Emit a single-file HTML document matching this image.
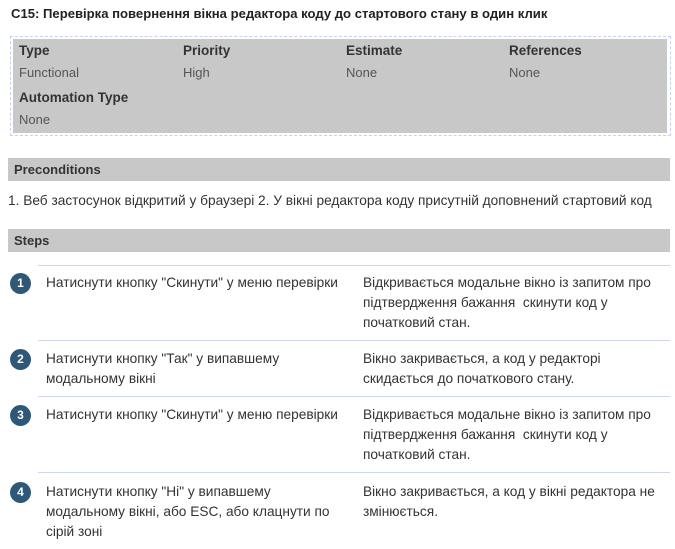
<!DOCTYPE html>
<html><head><meta charset="utf-8"><style>
*{margin:0;padding:0;box-sizing:border-box}
body{width:675px;height:549px;background:#fff;font-family:"Liberation Sans","DejaVu Sans",sans-serif;color:#333;position:relative;overflow:hidden}
.a{position:absolute;white-space:nowrap}
.t{font-size:13.1px;font-weight:bold;color:#222}
.lb{font-size:13.5px;font-weight:bold;color:#333}
.v{font-size:13px;color:#555}
.bar{position:absolute;left:8px;width:662px;height:23px;background:#c8c8c8}
.bar span{position:absolute;left:6px;top:4px;font-size:13px;font-weight:bold;color:#333}
.tx{font-size:13.7px;color:#333;line-height:20px}
.c{position:absolute;left:10px;width:21px;height:21px;border-radius:50%;background:#2f5878;color:#fff;font-size:12px;font-weight:bold;text-align:center;line-height:21px}
.hr{position:absolute;left:38px;width:632px;height:1px;background:#cfd6e6}
</style></head><body>
<div class="a t" style="left:11px;top:6px">C15: Перевірка повернення вікна редактора коду до стартового стану в один клик</div>
<div class="a" style="left:10px;top:36px;width:661px;height:100px;border:1px dashed #c6d2ec"></div>
<div class="a" style="left:13px;top:39px;width:654px;height:94px;background:#c8c8c8"></div>
<div class="a lb" style="left:19px;top:43px">Type</div>
<div class="a v" style="left:19px;top:65px">Functional</div>
<div class="a lb" style="left:183px;top:43px">Priority</div>
<div class="a v" style="left:183px;top:65px">High</div>
<div class="a lb" style="left:346px;top:43px">Estimate</div>
<div class="a v" style="left:346px;top:65px">None</div>
<div class="a lb" style="left:509px;top:43px">References</div>
<div class="a v" style="left:509px;top:65px">None</div>
<div class="a lb" style="left:19px;top:90px">Automation Type</div>
<div class="a v" style="left:19px;top:112px">None</div>
<div class="bar" style="top:158px"><span>Preconditions</span></div>
<div class="a tx" style="left:8px;top:191px">1. Веб застосунок відкритий у браузері 2. У вікні редактора коду присутній доповнений стартовий код</div>
<div class="bar" style="top:229px"><span>Steps</span></div>
<div class="hr" style="top:265px"></div>
<div class="c" style="top:273px">1</div>
<div class="a tx" style="left:46px;top:273px">Натиснути кнопку "Скинути" у меню перевірки</div>
<div class="a tx" style="left:363px;top:273px">Відкривається модальне вікно із запитом про<br>підтвердження бажання &nbsp;скинути код у<br>початковий стан.</div>
<div class="hr" style="top:340px"></div>
<div class="c" style="top:349px">2</div>
<div class="a tx" style="left:46px;top:349px">Натиснути кнопку "Так" у випавшему<br>модальному вікні</div>
<div class="a tx" style="left:363px;top:349px">Вікно закривається, а код у редакторі<br>скидається до початкового стану.</div>
<div class="hr" style="top:396px"></div>
<div class="c" style="top:405px">3</div>
<div class="a tx" style="left:46px;top:405px">Натиснути кнопку "Скинути" у меню перевірки</div>
<div class="a tx" style="left:363px;top:405px">Відкривається модальне вікно із запитом про<br>підтвердження бажання &nbsp;скинути код у<br>початковий стан.</div>
<div class="hr" style="top:472px"></div>
<div class="c" style="top:482px">4</div>
<div class="a tx" style="left:46px;top:482px">Натиснути кнопку "Ні" у випавшему<br>модальному вікні, або ESC, або клацнути по<br>сірій зоні</div>
<div class="a tx" style="left:363px;top:482px">Вікно закривається, а код у вікні редактора не<br>змінюється.</div>
</body></html>
